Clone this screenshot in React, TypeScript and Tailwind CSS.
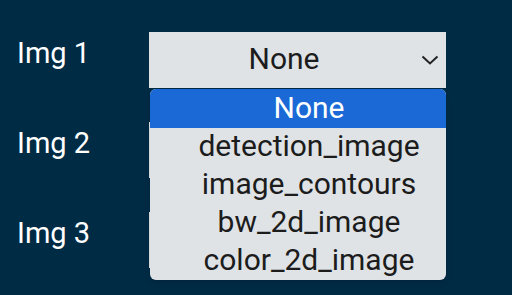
import React from 'react';

const options = ['None', 'detection_image', 'image_contours', 'bw_2d_image', 'color_2d_image'];

function Chevron() {
  return (
    <svg width="18" height="10" viewBox="0 0 18 10" className="shrink-0">
      <path d="M1.5 1.5 L9 8.5 L16.5 1.5" fill="none" stroke="#222" strokeWidth="2" />
    </svg>
  );
}

function SelectBox({ open }: { open?: boolean }) {
  return (
    <div className="relative w-[297px] h-[56px] bg-[#dfe3e6] flex items-center">
      <div className="flex-1 text-center text-[30px] text-[#1c1c1c] leading-none pb-[2px]">{open ? 'None' : ''}</div>
      <div className="w-[18px] flex items-center mr-[7px] ml-[2px]">
        <Chevron />
      </div>
      {open && (
        <div className="absolute left-[1px] top-[57px] w-[296px] bg-[#dfe3e6] rounded-md overflow-hidden shadow-md z-10">
          {options.map((o, i) => (
            <div
              key={o}
              className={
                i === 0
                  ? 'h-[39px] bg-[#1a69d6] text-white text-[30px] leading-[37px] text-center pl-[22px]'
                  : 'h-[38px] text-[#1c1c1c] text-[30px] leading-[36px] text-center pl-[22px]'
              }
            >
              {o}
            </div>
          ))}
        </div>
      )}
    </div>
  );
}

export default function App() {
  return (
    <div className="w-[512px] h-[295px] bg-[#002b45] overflow-hidden" style={{ fontFamily: 'Roboto, sans-serif' }}>
      <div className="flex flex-col gap-[34px] pt-[32px]">
        {[1, 2, 3].map((n) => (
          <div key={n} className="flex items-start h-[56px]">
            <div className="w-[149px] pl-[17px] mt-[6px] text-white text-[29px] leading-[30px]">Img {n}</div>
            <SelectBox open={n === 1} />
          </div>
        ))}
      </div>
    </div>
  );
}
